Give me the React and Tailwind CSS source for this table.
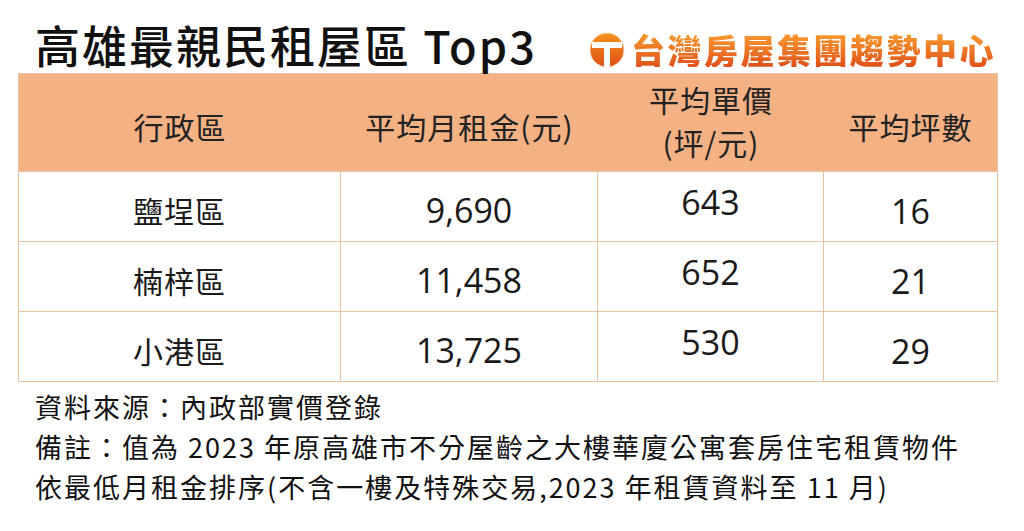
import React from "react";

const cjk = { fontFamily: '"Noto Sans CJK TC", "Noto Sans", sans-serif' };
const num = { fontFamily: '"Open Sans", "Noto Sans CJK TC", sans-serif' };

function Logo() {
  return (
    <div className="flex items-center gap-[6px]">
      <svg width="36" height="36" viewBox="0 0 36 36">
        <defs>
          <linearGradient id="lg" x1="0" y1="0" x2="0" y2="1">
            <stop offset="0" stopColor="#f7931e" />
            <stop offset="1" stopColor="#dd4f16" />
          </linearGradient>
        </defs>
        <circle cx="18" cy="18" r="17" fill="url(#lg)" stroke="#fbd6b8" strokeWidth="1" />
        <rect x="3" y="10" width="30" height="6" fill="#fff" />
        <rect x="15" y="14" width="6" height="21" fill="#fff" />
      </svg>
      <span
        className="text-[34px] font-black tracking-[2.5px] leading-none bg-gradient-to-b from-[#f89b30] to-[#e0501a] bg-clip-text text-transparent"
        style={cjk}
      >
        台灣房屋集團趨勢中心
      </span>
    </div>
  );
}

const rows = [
  ["鹽埕區", "9,690", "643", "16"],
  ["楠梓區", "11,458", "652", "21"],
  ["小港區", "13,725", "530", "29"],
];

export default function App() {
  return (
    <div className="w-[1024px] h-[531px] bg-white overflow-hidden text-[#1a1a1a]" style={cjk}>
      <div className="flex items-end justify-between h-[73px] pl-[35px] pr-[28px] pb-[5px]">
        <h1 className="text-[45px] leading-none tracking-[2px] font-medium text-[#111] pb-[1px]" style={cjk}>
          高雄最親民租屋區 Top3
        </h1>
        <div className="pb-[0px]">
          <Logo />
        </div>
      </div>

      <div className="mx-[18px] w-[980px] border border-[#e9c2a0]">
        <div className="grid grid-cols-[322px_257px_226px_173px] h-[97px] bg-[#f4b183] text-[30px] tracking-[1px] text-[#222]">
          <div className="flex items-center justify-center pt-[8px]">行政區</div>
          <div className="flex items-center justify-center pt-[8px]">平均月租金(元)</div>
          <div className="flex flex-col items-center justify-center leading-[43px] pb-[4px]">
            <span>平均單價</span>
            <span>(坪/元)</span>
          </div>
          <div className="flex items-center justify-center pt-[8px]">平均坪數</div>
        </div>
        {rows.map((r, i) => (
          <div
            key={i}
            className="grid grid-cols-[322px_257px_226px_173px] h-[70px] border-t border-[#e9c2a0] text-[34px]"
          >
            <div className="flex items-center justify-center pt-[8px] border-r border-[#e9c2a0] text-[30px] tracking-[1px]">
              {r[0]}
            </div>
            <div className="flex items-center justify-center pt-[8px] border-r border-[#e9c2a0]" style={num}>
              {r[1]}
            </div>
            <div className="flex items-center justify-center pb-[8px] border-r border-[#e9c2a0]" style={num}>
              {r[2]}
            </div>
            <div className="flex items-center justify-center pt-[10px]" style={num}>
              {r[3]}
            </div>
          </div>
        ))}
      </div>

      <div className="pl-[35px] pt-[5px] text-[27px] leading-[40px] tracking-[2px] text-[#111]" style={cjk}>
        <div>資料來源：內政部實價登錄</div>
        <div>備註：值為 2023 年原高雄市不分屋齡之大樓華廈公寓套房住宅租賃物件</div>
        <div>依最低月租金排序(不含一樓及特殊交易,2023 年租賃資料至 11 月)</div>
      </div>
    </div>
  );
}
